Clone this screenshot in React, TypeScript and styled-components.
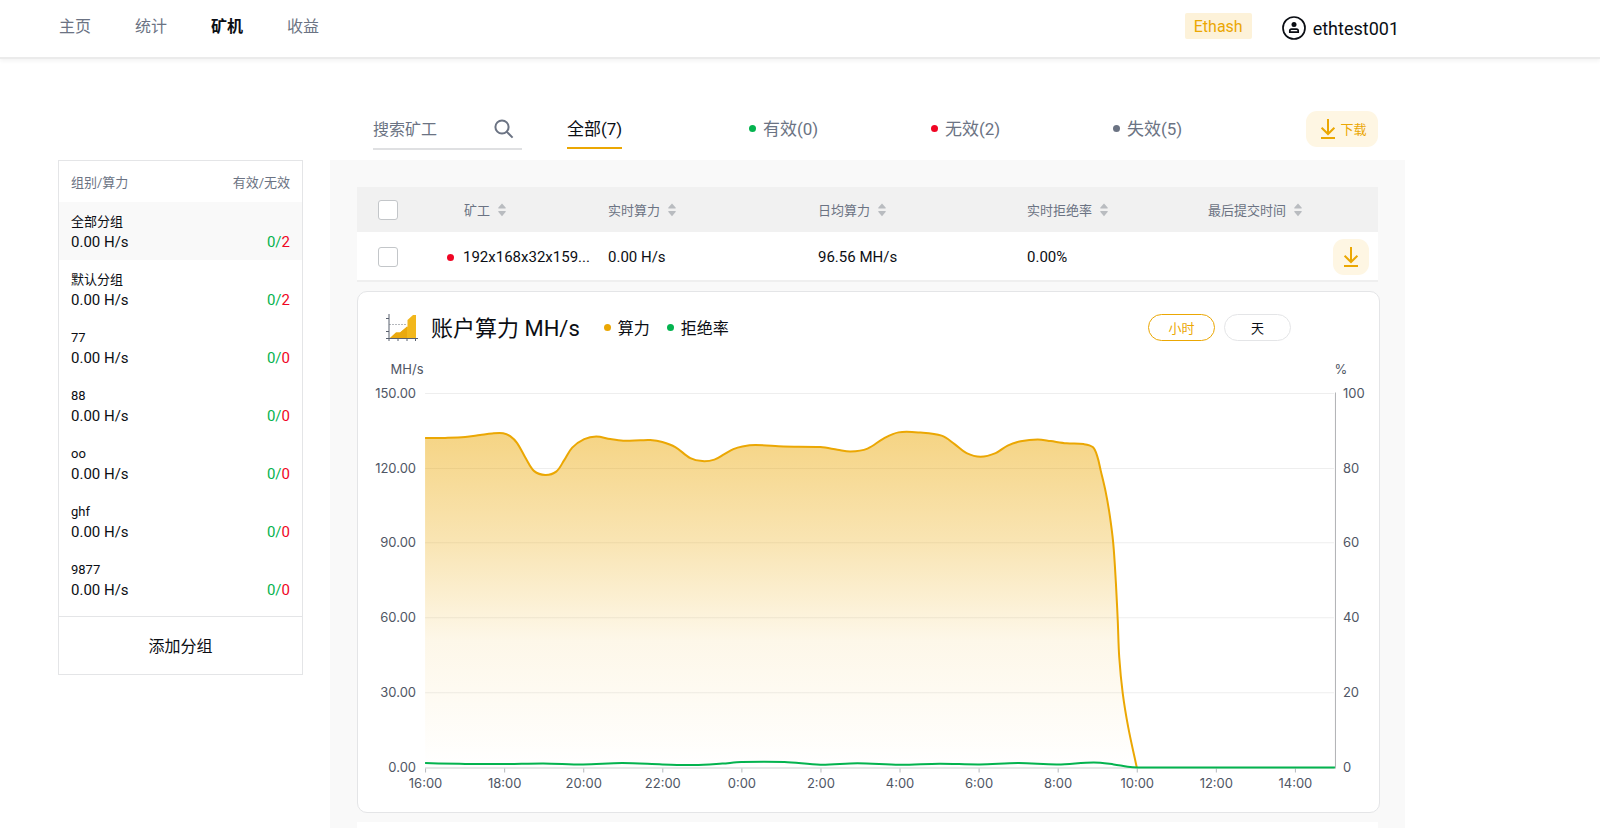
import React from 'react';
import styled, { createGlobalStyle } from 'styled-components';

const color = {
  ink: '#0b0e14',
  muted: '#6b7383',
  axis: '#4f5665',
  gold: '#eba703',
  goldSoft: '#fef6e3',
  green: '#04b34f',
  red: '#f00524',
  line: '#e4e5e7',
  panel: '#f9f9f9',
};

const GlobalStyle = createGlobalStyle`
  * { box-sizing: border-box; }
  body {
    margin: 0;
    background: #fff;
    color: ${color.ink};
    font-family: Roboto, 'Noto Sans CJK SC', sans-serif;
    font-size: 15px;
  }
  button, input { font-family: inherit; color: inherit; }
  button { border: 0; padding: 0; background: none; cursor: pointer; }
`;

const Page = styled.div`
  display: flex;
  flex-direction: column;
  min-height: 100vh;
`;

const Header = styled.header`
  display: flex;
  justify-content: space-between;
  align-items: flex-start;
  height: 59px;
  padding: 0 201px 0 59px;
  border-bottom: 2px solid #ebebeb;
  box-shadow: 0 2px 4px rgba(0, 0, 0, 0.05);
`;

const Nav = styled.nav`
  display: flex;
  gap: 44px;
  padding-top: 15px;
`;

const NavLink = styled.a<{ $active?: boolean }>`
  font-size: 16px;
  line-height: 24px;
  text-decoration: none;
  color: ${(p) => (p.$active ? color.ink : color.muted)};
  font-weight: ${(p) => (p.$active ? 700 : 400)};
`;

const Account = styled.div`
  display: flex;
  align-items: flex-start;
  padding-top: 13px;
  gap: 30px;
`;

const Algorithm = styled.button`
  height: 26px;
  padding: 0 9px;
  border-radius: 2px;
  background: #fdf2d9;
  color: ${color.gold};
  font-size: 16px;
  line-height: 28px;
`;

const User = styled.a`
  display: flex;
  align-items: center;
  gap: 7px;
  height: 30px;
  color: ${color.ink};
  font-size: 18px;
  text-decoration: none;
`;

const Content = styled.div`
  display: flex;
  flex: 1;
  align-items: stretch;
  gap: 27px;
  padding: 51px 195px 0 58px;
`;

const Sidebar = styled.aside`
  flex: 0 0 245px;
  align-self: flex-start;
  margin-top: 50px;
  border: 1px solid ${color.line};
`;

const SideHead = styled.div`
  display: flex;
  justify-content: space-between;
  height: 41px;
  padding: 0 12px;
  font-size: 13px;
  line-height: 43px;
  color: ${color.muted};
`;

const GroupList = styled.ul`
  margin: 0;
  padding: 0 0 8px;
  list-style: none;
`;

const Group = styled.button<{ $active?: boolean }>`
  display: grid;
  grid-template-columns: 1fr auto;
  align-content: center;
  width: 100%;
  height: 58px;
  padding: 2px 12px 0;
  text-align: left;
  line-height: 21px;
  background: ${(p) => (p.$active ? color.panel : 'transparent')};
`;

const GroupName = styled.span`
  grid-column: 1 / -1;
  font-size: 13px;
`;

const GroupRate = styled.span`
  font-size: 15px;
`;

const GroupCount = styled.span`
  font-size: 15px;
  color: ${color.red};
  em {
    font-style: normal;
    color: ${color.green};
  }
`;

const AddGroup = styled.button`
  width: 100%;
  height: 58px;
  padding-bottom: 2px;
  border-top: 1px solid ${color.line};
  font-size: 16px;
`;

const Main = styled.main`
  display: flex;
  flex: 1;
  flex-direction: column;
  min-width: 0;
`;

const Toolbar = styled.div`
  display: flex;
  align-items: flex-start;
  height: 50px;
  padding: 0 27px 0 43px;
`;

const Search = styled.form`
  display: flex;
  align-items: center;
  width: 149px;
  height: 40px;
  padding-right: 8px;
  border-bottom: 2px solid #dfe0e2;
  color: ${color.muted};
`;

const SearchInput = styled.input`
  flex: 1;
  min-width: 0;
  height: 36px;
  padding: 0;
  border: 0;
  outline: 0;
  background: none;
  font-size: 16px;
  &::placeholder { color: ${color.muted}; opacity: 1; }
`;

const IconButton = styled.button`
  display: flex;
`;

const Tabs = styled.div`
  display: grid;
  flex: 1;
  grid-template-columns: repeat(4, 182px);
  justify-items: start;
  margin-left: 45px;
`;

const Tab = styled.button<{ $active?: boolean }>`
  display: flex;
  align-items: center;
  gap: 7px;
  height: 39px;
  border-bottom: 2px solid ${(p) => (p.$active ? color.gold : 'transparent')};
  color: ${(p) => (p.$active ? color.ink : color.muted)};
  font-size: 17px;
`;

const Label = styled.span`
  padding-bottom: 2px;
`;

const Dot = styled.i<{ $color: string }>`
  flex: none;
  width: 7px;
  height: 7px;
  border-radius: 50%;
  background: ${(p) => p.$color};
`;

const Download = styled.button<{ $wide?: boolean }>`
  display: inline-flex;
  align-items: center;
  justify-content: center;
  gap: 4px;
  width: ${(p) => (p.$wide ? 72 : 36)}px;
  height: 36px;
  padding-left: ${(p) => (p.$wide ? 3 : 0)}px;
  border-radius: 11px;
  background: ${color.goldSoft};
  color: ${color.gold};
  font-size: 13px;
`;

const ToolbarAction = styled.div`
  display: flex;
  padding-top: 1px;
`;

const Panel = styled.section`
  display: flex;
  flex: 1;
  flex-direction: column;
  padding: 27px 27px 0;
  background: ${color.panel};
`;

const WorkerTable = styled.table`
  width: 100%;
  table-layout: fixed;
  border-collapse: separate;
  border-spacing: 0;
  th, td {
    padding: 0;
    text-align: left;
    vertical-align: middle;
    font-weight: 400;
  }
  thead th { height: 45px; background: #f1f1f1; }
  tbody td { height: 50px; padding-top: 2px; background: #fff; border-bottom: 2px solid #efefef; }
`;

const Check = styled.input`
  appearance: none;
  display: block;
  width: 20px;
  height: 20px;
  margin: 0 0 0 21px;
  border: 1px solid #c3c6c9;
  border-radius: 3px;
  background: #fff;
`;

const SortButton = styled.button<{ $indent?: boolean }>`
  display: flex;
  align-items: center;
  gap: 8px;
  padding-left: ${(p) => (p.$indent ? 17 : 0)}px;
  color: ${color.muted};
  font-size: 13px;
`;

const Worker = styled.span`
  display: flex;
  align-items: center;
  gap: 9px;
  font-size: 15px;
  white-space: nowrap;
`;

const ActionCell = styled.div`
  display: flex;
  justify-content: flex-end;
  padding-right: 9px;
`;

const ChartCard = styled.section`
  margin: 9px -2px 9px 0;
  height: 522px;
  border: 1px solid ${color.line};
  border-radius: 10px;
  background: #fff;
`;

const ChartHead = styled.div`
  display: flex;
  align-items: center;
  height: 65px;
  padding: 6px 88px 0 28px;
`;

const ChartTitle = styled.h2`
  margin: 0 24px 0 13px;
  padding-bottom: 4px;
  font-size: 22px;
  font-weight: 400;
`;

const Legend = styled.span`
  display: flex;
  align-items: center;
  gap: 7px;
  margin-right: 17px;
  font-size: 16px;
`;

const Periods = styled.div`
  display: flex;
  gap: 9px;
  margin-left: auto;
`;

const Period = styled.button<{ $active?: boolean }>`
  width: 67px;
  height: 27px;
  border: 1px solid ${(p) => (p.$active ? color.gold : color.line)};
  border-radius: 14px;
  color: ${(p) => (p.$active ? color.gold : color.ink)};
  font-size: 13px;
`;

const ChartSvg = styled.svg`
  display: block;
  width: 100%;
  font-family: Inter, sans-serif;
  font-size: 13px;
`;

const NextRow = styled.div`
  flex: 1;
  min-height: 6px;
  background: #fff;
`;

const DownloadIcon = () => (
  <svg width="16" height="20" viewBox="0 0 16 20" fill="none" stroke="currentColor" strokeWidth="2">
    <path d="M8 0V15M1.6 8.8 8 15l6.4-6.2M1 19h14" />
  </svg>
);

const SearchIcon = () => (
  <svg width="20" height="20" viewBox="0 0 20 20" fill="none" stroke="currentColor" strokeWidth="2">
    <circle cx="8" cy="8" r="6.6" />
    <path d="m12.6 12.6 6 6" />
  </svg>
);

const UserIcon = () => (
  <svg width="24" height="24" viewBox="0 0 24 24" fill="none" stroke="currentColor">
    <circle cx="12" cy="12" r="11" strokeWidth="1.7" />
    <circle cx="12" cy="8.5" r="2.5" fill="currentColor" stroke="none" />
    <path d="M7.8 16.2v-1.4c0-1 .7-1.7 1.7-1.7h5c1 0 1.7.7 1.7 1.7v1.4z" strokeWidth="1.7" />
  </svg>
);

const SortIcon = () => (
  <svg width="8" height="14" viewBox="0 0 8 14" fill="#b9bcc0">
    <path d="M4 .5 7.6 4.6c.3.4.1 1-.5 1H.9c-.6 0-.8-.6-.5-1zM4 13.2.4 9.1c-.3-.4-.1-1 .5-1h6.2c.6 0 .8.6.5 1z" />
  </svg>
);

const ChartIcon = () => (
  <svg width="32" height="28" viewBox="0 0 32 28" fill="none">
    <path d="M3.5 24.5 10 18.5h4L21.5 12.5V6L27 1h3v23.5z" fill="#f2b71c" />
    <path d="M21 12.5v12H3.5l6.5-6h4z" fill="#eaa90f" />
    <path d="M3 10.5h18" stroke="#b5b8bd" strokeDasharray="2 1" />
    <path d="M3 0v27M0 24.5h32M0 4.5h3M0 17.5h3M12 24.5V27M21 24.5V27M29.5 24.5V27" stroke="#59606e" />
  </svg>
);

type Point = [number, number];

const hashrate: Point[] = [
  [68, 75], [88, 74.8], [108, 74], [123, 72], [135, 70.4], [146, 70.2], [153, 73], [160, 80],
  [169, 96], [177, 108], [188, 111.8], [199, 108.5], [207, 97], [215, 84.5], [227, 76], [239, 73.4],
  [253, 76], [266, 77.6], [283, 77.2], [293, 77], [305, 79], [318, 84], [333, 95], [345, 98], [357, 96.5],
  [367, 91], [376, 86], [385, 83.4], [398, 82], [426, 83.4], [463, 84], [480, 86.6], [493, 88.5],
  [510, 85.5], [526, 75.5], [541, 69.3], [563, 69.5], [584, 72.6], [597, 81], [609, 90], [623, 93.6],
  [638, 90], [650, 82.5], [663, 78.2], [680, 76.3], [693, 78], [709, 80.2], [726, 81],
  [735, 84], [739.5, 93], [743, 107.5], [748, 129], [752, 152], [755.5, 180], [758, 217], [760, 257],
  [761.5, 294], [765, 330], [770.5, 364], [779, 404],
];

const rejectRate: Point[] = [
  [68, 399.7], [108, 400.5], [147, 400.7], [186, 400], [226, 401], [265, 399.7], [305, 401], [337, 401.7],
  [365, 400.2], [384, 398.7], [427, 398.7], [463, 401.3], [500, 399.8], [542, 401.3], [582, 400.3],
  [622, 401], [661, 399.7], [700, 401], [736, 399], [756, 401], [770, 403.3], [780, 404], [800, 404], [977, 404],
];

// Unit tangent at a point, taken from its two neighbours.
const tangent = (pts: Point[], i: number): Point => {
  const a = pts[Math.max(i - 1, 0)];
  const b = pts[Math.min(i + 1, pts.length - 1)];
  const length = Math.hypot(b[0] - a[0], b[1] - a[1]);
  return [(b[0] - a[0]) / length, (b[1] - a[1]) / length];
};

const smooth = (pts: Point[]) =>
  pts.reduce((d, [x, y], i) => {
    if (i === 0) return `M${x} ${y}`;
    const [px, py] = pts[i - 1];
    const reach = Math.hypot(x - px, y - py) / 3;
    const [t1x, t1y] = tangent(pts, i - 1);
    const [t2x, t2y] = tangent(pts, i);
    return `${d}C${px + t1x * reach} ${py + t1y * reach} ${x - t2x * reach} ${y - t2y * reach} ${x} ${y}`;
  }, '');

const rows = ['150.00', '120.00', '90.00', '60.00', '30.00', '0.00'];
const percents = ['100', '80', '60', '40', '20', '0'];
const hours = ['16:00', '18:00', '20:00', '22:00', '0:00', '2:00', '4:00', '6:00', '8:00', '10:00', '12:00', '14:00'];
const rowY = (i: number) => 30.5 + i * 75 - (i > 1 ? 1 : 0);
const hourX = (i: number) => 68.5 + i * 79;

const HashrateChart = () => {
  const curve = smooth(hashrate);
  return (
    <ChartSvg viewBox="1 -6 1020 454" role="img" aria-label="账户算力">
      <defs>
        <linearGradient id="fill" x1="0" y1="0" x2="0" y2="1">
          <stop offset="0" stopColor="#eba703" stopOpacity="0.49" />
          <stop offset="0.33" stopColor="#eba703" stopOpacity="0.3" />
          <stop offset="0.62" stopColor="#eba703" stopOpacity="0.09" />
          <stop offset="1" stopColor="#eba703" stopOpacity="0" />
        </linearGradient>
      </defs>
      <g fill={color.axis}>
        <text x="50" y="11" textAnchor="middle">MH/s</text>
        <text x="983" y="11" textAnchor="middle">%</text>
        {rows.map((label, i) => (
          <text key={label} x="59" y={rowY(i) + 4.5} textAnchor="end">{label}</text>
        ))}
        {percents.map((label, i) => (
          <text key={label} x="985" y={rowY(i) + 4.5}>{label}</text>
        ))}
        {hours.map((label, i) => (
          <text key={label} x={hourX(i)} y="425" textAnchor="middle">{label}</text>
        ))}
      </g>
      {rows.slice(0, 5).map((label, i) => (
        <path key={label} d={`M68 ${rowY(i)}H976`} stroke="#eeeeee" />
      ))}
      <path d={`${curve}L68 404Z`} fill="url(#fill)" />
      <path d="M68 404.5H976" stroke="#c9cfcd" />
      {hours.map((label, i) => (
        <path key={label} d={`M${hourX(i)} 405v4`} stroke="#b5b9bd" />
      ))}
      <path d="M977.5 29.5V405" stroke="#b0b2b5" />
      <path d={curve} fill="none" stroke={color.gold} strokeWidth="2" strokeLinejoin="round" />
      <path d={smooth(rejectRate)} fill="none" stroke={color.green} strokeWidth="2" />
    </ChartSvg>
  );
};

const groups = [
  { name: '全部分组', idle: 2 },
  { name: '默认分组', idle: 2 },
  { name: '77', idle: 0 },
  { name: '88', idle: 0 },
  { name: 'oo', idle: 0 },
  { name: 'ghf', idle: 0 },
  { name: '9877', idle: 0 },
];

const columns = ['矿工', '实时算力', '日均算力', '实时拒绝率', '最后提交时间'];

export default function App() {
  return (
    <Page>
      <GlobalStyle />
      <Header>
        <Nav>
          {['主页', '统计', '矿机', '收益'].map((item) => (
            <NavLink key={item} href="#" $active={item === '矿机'}>{item}</NavLink>
          ))}
        </Nav>
        <Account>
          <Algorithm>Ethash</Algorithm>
          <User href="#"><UserIcon />ethtest001</User>
        </Account>
      </Header>
      <Content>
        <Sidebar>
          <SideHead><span>组别/算力</span><span>有效/无效</span></SideHead>
          <GroupList>
            {groups.map((g, i) => (
              <li key={g.name}>
                <Group $active={i === 0}>
                  <GroupName>{g.name}</GroupName>
                  <GroupRate>0.00 H/s</GroupRate>
                  <GroupCount><em>0/</em>{g.idle}</GroupCount>
                </Group>
              </li>
            ))}
          </GroupList>
          <AddGroup>添加分组</AddGroup>
        </Sidebar>
        <Main>
          <Toolbar>
            <Search>
              <SearchInput type="text" placeholder="搜索矿工" aria-label="搜索矿工" />
              <IconButton type="button" aria-label="搜索"><SearchIcon /></IconButton>
            </Search>
            <Tabs>
              <Tab $active><Label>全部(7)</Label></Tab>
              <Tab><Dot $color={color.green} /><Label>有效(0)</Label></Tab>
              <Tab><Dot $color={color.red} /><Label>无效(2)</Label></Tab>
              <Tab><Dot $color={color.muted} /><Label>失效(5)</Label></Tab>
            </Tabs>
            <ToolbarAction>
              <Download $wide><DownloadIcon /><Label>下载</Label></Download>
            </ToolbarAction>
          </Toolbar>
          <Panel>
            <WorkerTable>
              <colgroup>
                {[90, 161, 210, 209, 181, 170].map((w, i) => <col key={i} width={w} />)}
              </colgroup>
              <thead>
                <tr>
                  <th><Check type="checkbox" aria-label="全选" /></th>
                  {columns.map((label, i) => (
                    <th key={label}>
                      <SortButton $indent={i === 0}>{label}<SortIcon /></SortButton>
                    </th>
                  ))}
                </tr>
              </thead>
              <tbody>
                <tr>
                  <td><Check type="checkbox" aria-label="选择矿工" /></td>
                  <td><Worker><Dot $color={color.red} />192x168x32x159...</Worker></td>
                  <td>0.00 H/s</td>
                  <td>96.56 MH/s</td>
                  <td>0.00%</td>
                  <td><ActionCell><Download aria-label="下载"><DownloadIcon /></Download></ActionCell></td>
                </tr>
              </tbody>
            </WorkerTable>
            <ChartCard>
              <ChartHead>
                <ChartIcon />
                <ChartTitle>账户算力 MH/s</ChartTitle>
                <Legend><Dot $color={color.gold} /><Label>算力</Label></Legend>
                <Legend><Dot $color={color.green} /><Label>拒绝率</Label></Legend>
                <Periods>
                  <Period $active>小时</Period>
                  <Period>天</Period>
                </Periods>
              </ChartHead>
              <HashrateChart />
            </ChartCard>
            <NextRow />
          </Panel>
        </Main>
      </Content>
    </Page>
  );
}
